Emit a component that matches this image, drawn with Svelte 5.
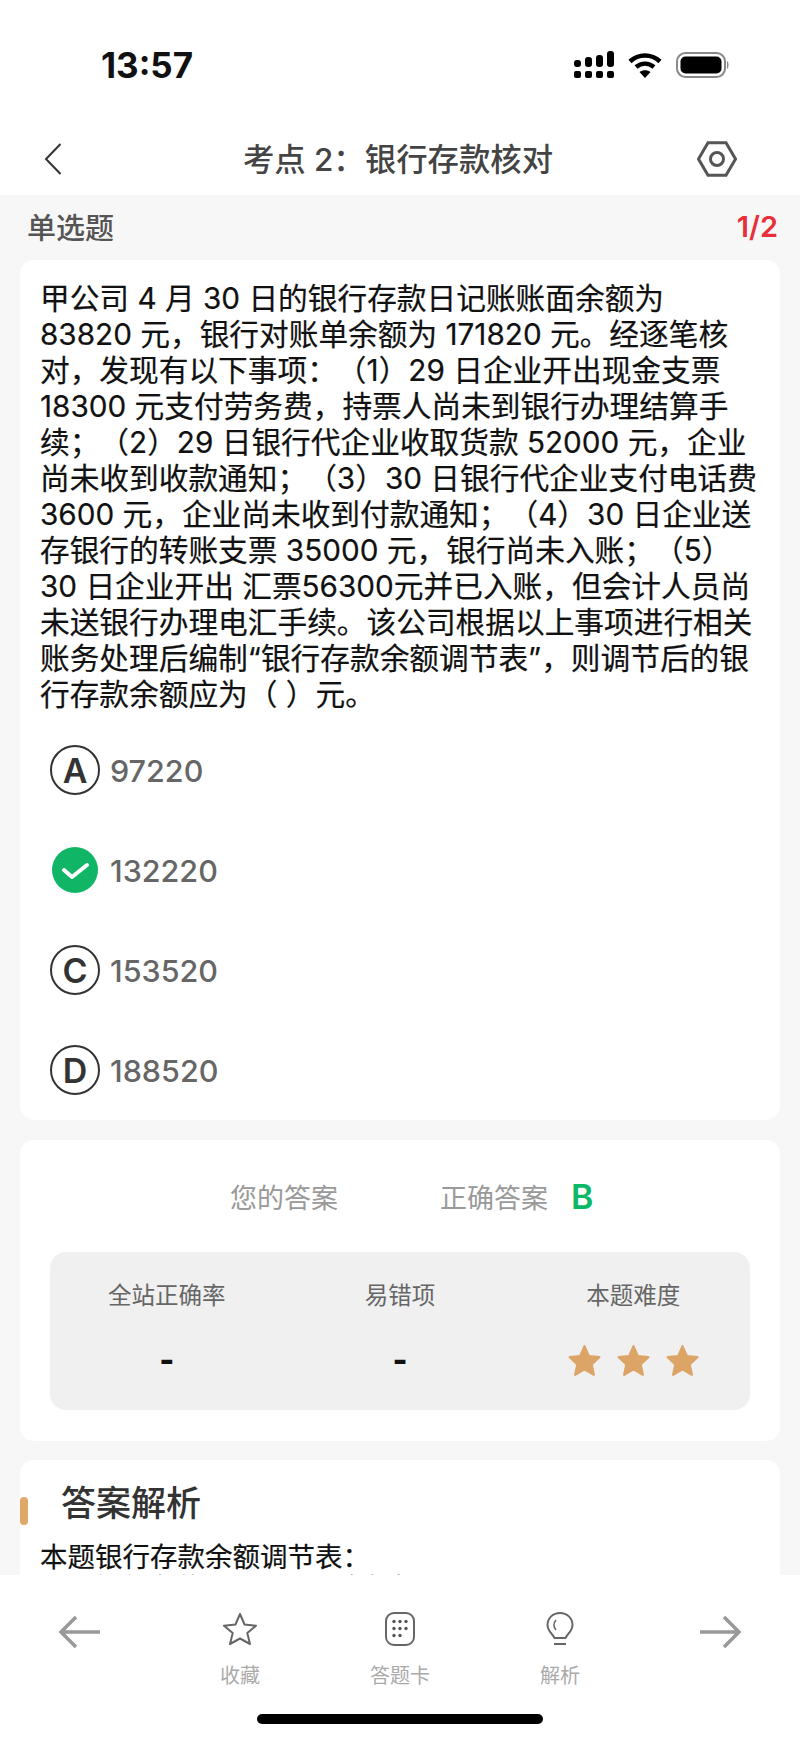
<script>
	const lines = [
		'甲公司 4 月 30 日的银行存款日记账账面余额为',
		'83820 元，银行对账单余额为 171820 元。经逐笔核',
		'对，发现有以下事项：（1）29 日企业开出现金支票',
		'18300 元支付劳务费，持票人尚未到银行办理结算手',
		'续；（2）29 日银行代企业收取货款 52000 元，企业',
		'尚未收到收款通知；（3）30 日银行代企业支付电话费',
		'3600 元，企业尚未收到付款通知；（4）30 日企业送',
		'存银行的转账支票 35000 元，银行尚未入账；（5）',
		'30 日企业开出 汇票56300元并已入账，但会计人员尚',
		'未送银行办理电汇手续。该公司根据以上事项进行相关',
		'账务处理后编制“银行存款余额调节表”，则调节后的银',
		'行存款余额应为（ ）元。'
	];
	const options = [
		{ key: 'A', value: '97220' },
		{ key: 'B', value: '132220', correct: true },
		{ key: 'C', value: '153520' },
		{ key: 'D', value: '188520' }
	];
	const starPath = 'M15 2 L19 11 L28.5 12 L21.5 18.5 L23.5 28 L15 23 L6.5 28 L8.5 18.5 L1.5 12 L11 11 Z';
</script>

<div class="page">
	<header class="status">
		<span class="time">13:57</span>
		<div class="status-icons">
			<svg class="signal" width="40" height="28" viewBox="0 0 40 28">
				<rect x="0" y="9" width="7" height="7" rx="3" />
				<rect x="11" y="6" width="7" height="10" rx="3" />
				<rect x="22" y="4" width="7" height="12" rx="3" />
				<rect x="33" y="0" width="7" height="16" rx="3" />
				<rect x="0" y="20" width="7" height="7" rx="2" />
				<rect x="11" y="20" width="7" height="7" rx="2" />
				<rect x="22" y="20" width="7" height="7" rx="2" />
				<rect x="33" y="20" width="7" height="7" rx="2" />
			</svg>
			<svg class="wifi" width="34" height="26" viewBox="0 0 34 26">
				<path d="M2 9.5 C10.500 1.500 23.500 1.500 32 9.500" />
				<path d="M8 15 C13.500 10.500 20.500 10.500 26 15" />
				<path class="fill" d="M11.500 20 C15 17.500 19 17.500 22.500 20 L17 26 Z" />
			</svg>
			<svg width="54" height="26" viewBox="0 0 54 26">
				<rect class="bat-frame" x="1" y="1" width="48" height="24" rx="8.500" />
				<rect x="4.500" y="4.500" width="41" height="17" rx="5" />
				<path class="bat-nub" d="M51 9 C53 10 53 16 51 17 Z" />
			</svg>
		</div>
	</header>

	<nav class="nav">
		<svg width="18" height="32" viewBox="0 0 18 32">
			<path class="back" d="M16.500 1 L2 16 L16.500 31" />
		</svg>
		<h1>考点 2：银行存款核对</h1>
		<svg width="40" height="36" viewBox="0 0 40 36">
			<path class="hex" d="M1.500 18 L11 1.700 H29 L38.500 18 L29 34.300 H11 Z" />
			<circle class="hex" cx="20" cy="18" r="6.500" />
		</svg>
	</nav>

	<main class="content">
		<div class="meta">
			<span>单选题</span>
			<span class="progress">1/2</span>
		</div>

		<section class="card question">
			<div class="stem">
				{#each lines as line}
					<div>{line}</div>
				{/each}
			</div>
			<ul class="options">
				{#each options as opt}
					<li>
						{#if opt.correct}
							<svg class="tick" width="46" height="46" viewBox="0 0 46 46">
								<circle cx="23" cy="23" r="23" />
								<path d="M12 23 L20 30 L35 18" />
							</svg>
						{:else}
							<span class="badge">{opt.key}</span>
						{/if}
						<span class="opt-text">{opt.value}</span>
					</li>
				{/each}
			</ul>
		</section>

		<section class="card summary">
			<div class="answers">
				<span>您的答案</span>
				<span class="right-answer">正确答案<b>B</b></span>
			</div>
			<div class="stats">
				<div class="stat">
					<span class="stat-label">全站正确率</span>
					<span class="stat-value">-</span>
				</div>
				<div class="stat">
					<span class="stat-label">易错项</span>
					<span class="stat-value">-</span>
				</div>
				<div class="stat">
					<span class="stat-label">本题难度</span>
					<span class="stat-value stars">
						{#each [0, 1, 2] as i (i)}
							<svg width="33" height="33" viewBox="0 0 30 30"><path d={starPath} /></svg>
						{/each}
					</span>
				</div>
			</div>
		</section>

		<section class="card analysis">
			<div class="analysis-head">
				<i class="marker"></i>
				<h2>答案解析</h2>
			</div>
			<p class="analysis-text">本题银行存款余额调节表：</p>
			<p class="analysis-next">银行存款日记账账面余额如下</p>
		</section>
	</main>

	<footer class="tabbar">
		<div class="tabs">
			<div class="tab">
				<svg class="arrow" width="42" height="34" viewBox="0 0 42 34">
					<path d="M17 2 L2 17 L17 32 M2 17 H41" />
				</svg>
			</div>
			<div class="tab">
				<svg width="36" height="34" viewBox="0 0 36 34">
					<path class="line" d="M18 2 L22.500 12.500 L34 13.700 L25.300 21 L28 32 L18 26.500 L8 32 L10.700 21 L2 13.700 L13.500 12.500 Z" />
				</svg>
				<span>收藏</span>
			</div>
			<div class="tab">
				<svg width="30" height="34" viewBox="0 0 30 34">
					<rect class="line" x="1" y="1" width="28" height="32" rx="8" />
					<g class="dots">
						<circle cx="9" cy="9.500" r="1.700" /><circle cx="15" cy="9.500" r="1.700" /><circle cx="21" cy="9.500" r="1.700" />
						<circle cx="9" cy="16.500" r="1.700" /><circle cx="15" cy="16.500" r="1.700" /><circle cx="21" cy="16.500" r="1.700" />
						<circle cx="9" cy="23.500" r="1.700" /><circle cx="15" cy="23.500" r="1.700" />
					</g>
				</svg>
				<span>答题卡</span>
			</div>
			<div class="tab">
				<svg width="28" height="34" viewBox="0 0 28 34">
					<path class="line" d="M8.500 26 C6 21 1.500 19 1.500 13 C1.500 6 7 1 14 1 C21 1 26.500 6 26.500 13 C26.500 19 22 21 19.500 26 Z" />
					<path class="line" d="M8 32 H20" />
					<path class="line thin" d="M10 8 C7.500 11 7.500 15 10 18" />
				</svg>
				<span>解析</span>
			</div>
			<div class="tab">
				<svg class="arrow" width="42" height="34" viewBox="0 0 42 34">
					<path d="M25 2 L40 17 L25 32 M40 17 H1" />
				</svg>
			</div>
		</div>
		<div class="home"></div>
	</footer>
</div>

<style>
	:global(body) {
		background: #fff;
	}
	.page {
		width: 800px;
		height: 1740px;
		display: flex;
		flex-direction: column;
		overflow: hidden;
		background: #fff;
		color: #222;
		font-family: Inter, 'Noto Sans CJK SC', sans-serif;
		text-spacing-trim: space-all;
	}
	h1,
	h2,
	p,
	ul {
		margin: 0;
		padding: 0;
	}

	.status {
		height: 120px;
		flex: none;
		display: flex;
		align-items: center;
		justify-content: space-between;
		padding: 10px 70px 0 101px;
		box-sizing: border-box;
	}
	.time {
		font-size: 35px;
		font-weight: 700;
		color: #111;
	}
	.status-icons {
		display: flex;
		align-items: center;
		gap: 14px;
	}
	.signal rect {
		fill: #000;
	}
	.wifi path {
		fill: none;
		stroke: #000;
		stroke-width: 4.500;
	}
	.wifi path.fill {
		fill: #000;
		stroke: none;
	}
	.status-icons rect {
		fill: #000;
	}
	.status-icons rect.bat-frame {
		fill: none;
		stroke: #888;
		stroke-width: 2;
	}
	.bat-nub {
		fill: #888;
	}

	.nav {
		height: 75px;
		flex: none;
		display: flex;
		align-items: center;
		padding: 3px 63px 0 44px;
		box-sizing: border-box;
	}
	.nav h1 {
		flex: 1;
		text-align: center;
		font-size: 31.400px;
		font-weight: 500;
		color: #444;
		white-space: nowrap;
		padding-left: 37px;
		margin-top: -4px;
	}
	.back {
		fill: none;
		stroke: #333;
		stroke-width: 2;
	}
	.hex {
		fill: none;
		stroke: #555;
		stroke-width: 3;
	}

	.content {
		flex: 1;
		min-height: 0;
		overflow: hidden;
		background: #f7f7f7;
		padding: 0 20px;
	}
	.meta {
		height: 65px;
		display: flex;
		align-items: center;
		justify-content: space-between;
		padding: 0 2px 3px 7px;
		box-sizing: border-box;
		font-size: 29px;
		font-weight: 500;
		color: #555;
	}
	.progress {
		color: #e8303a;
		font-size: 29px;
		font-weight: 600;
	}
	.card {
		background: #fff;
		border-radius: 14px;
	}

	.question {
		height: 860px;
		padding-top: 20px;
		box-sizing: border-box;
	}
	.stem {
		padding-left: 20px;
		font-size: 29.700px;
		font-weight: 400;
		line-height: 36px;
		white-space: nowrap;
		color: #111;
		-webkit-text-stroke: 0.2px #111;
	}
	.options {
		list-style: none;
		margin-top: 8px;
	}
	.options li {
		height: 100px;
		display: flex;
		align-items: center;
		padding-left: 30px;
		gap: 10px;
	}
	.badge {
		width: 50px;
		height: 50px;
		box-sizing: border-box;
		border: 2px solid #333;
		border-radius: 50%;
		display: flex;
		align-items: center;
		justify-content: center;
		font-size: 34px;
		font-weight: 600;
		color: #333;
	}
	.tick {
		margin: 0 2px;
	}
	.tick circle {
		fill: #10b565;
	}
	.tick path {
		fill: none;
		stroke: #fff;
		stroke-width: 4;
		stroke-linecap: round;
		stroke-linejoin: round;
	}
	.opt-text {
		font-size: 30.500px;
		font-weight: 500;
		color: #666;
	}

	.summary {
		margin-top: 20px;
		height: 301px;
		padding: 0 30px;
		box-sizing: border-box;
	}
	.answers {
		height: 112px;
		display: flex;
		align-items: center;
		padding-left: 180px;
		gap: 102px;
		font-size: 27px;
		color: #999;
	}
	.right-answer {
		display: flex;
		align-items: center;
		gap: 23px;
	}
	.right-answer b {
		font-size: 34px;
		font-weight: 600;
		color: #0cb865;
	}
	.stats {
		height: 158px;
		display: grid;
		grid-template-columns: repeat(3, 1fr);
		background: #f0f0f0;
		border-radius: 16px;
		padding-top: 29px;
		box-sizing: border-box;
	}
	.stat {
		display: flex;
		flex-direction: column;
		align-items: center;
	}
	.stat-label {
		font-size: 23.500px;
		line-height: 30px;
		color: #666;
	}
	.stat-value {
		margin-top: 29px;
		height: 40px;
		line-height: 40px;
		font-size: 32px;
		font-weight: 800;
		color: #111;
	}
	.stars {
		display: flex;
		align-items: center;
		gap: 16px;
		font-size: 0;
		padding-left: 1px;
	}
	.stars path {
		fill: #dca467;
		stroke: #dca467;
		stroke-width: 2;
		stroke-linejoin: round;
	}

	.analysis {
		margin-top: 19px;
		padding-top: 21px;
		border-radius: 14px 14px 0 0;
	}
	.analysis-head {
		display: flex;
	}
	.marker {
		width: 8px;
		height: 28px;
		align-self: flex-end;
		background: #e0a868;
		border-radius: 4px;
		margin-right: 33px;
	}
	.analysis h2 {
		font-size: 35px;
		line-height: 44px;
		font-weight: 500;
		color: #333;
	}
	.analysis-text {
		margin-top: 16px;
		padding-left: 20px;
		font-size: 27.500px;
		line-height: 32px;
		color: #111;
		-webkit-text-stroke: 0.2px #111;
	}
	.analysis-next {
		padding-left: 75px;
		padding-top: 2px;
		font-size: 27px;
		line-height: 27px;
		font-weight: 500;
		color: #555;
		white-space: nowrap;
	}

	.tabbar {
		height: 165px;
		flex: none;
		display: flex;
		flex-direction: column;
		background: #fff;
		position: relative;
	}
	.tabs {
		display: grid;
		grid-template-columns: repeat(5, 160px);
		padding-top: 37px;
	}
	.tab {
		display: flex;
		flex-direction: column;
		align-items: center;
	}
	.tab span {
		margin-top: 18px;
		font-size: 20px;
		line-height: 24px;
		color: #aaa;
	}
	.arrow {
		margin-top: 3px;
	}
	.arrow path {
		fill: none;
		stroke: #999;
		stroke-width: 3.500;
	}
	.line {
		fill: none;
		stroke: #666;
		stroke-width: 2;
		stroke-linejoin: round;
	}
	.line.thin {
		stroke-width: 1.500;
	}
	.dots circle {
		fill: #555;
	}
	.home {
		width: 286px;
		height: 10px;
		margin: auto auto 16px;
		background: #000;
		border-radius: 5px;
	}
</style>
